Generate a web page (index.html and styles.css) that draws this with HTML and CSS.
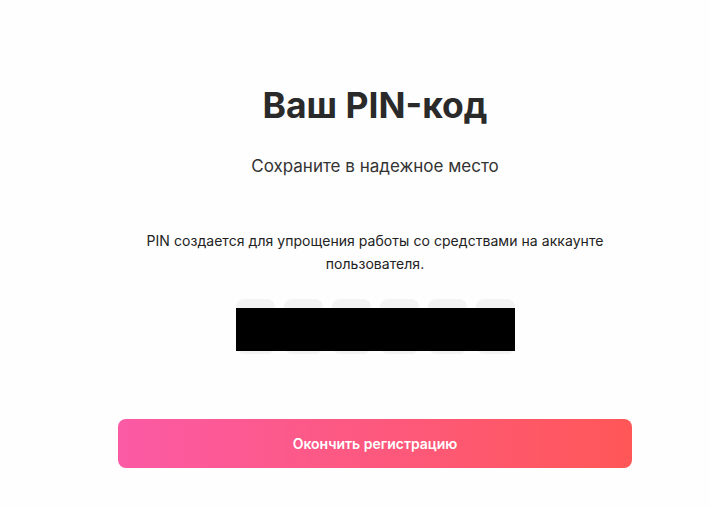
FILE: index.html
```html
<!DOCTYPE html>
<html>
<head>
  <title>PIN</title>
  <meta charset="UTF-8">
  <link rel="stylesheet" href="styles.css">
</head>
<body>
  <div class="page">
    <h1 class="title">Ваш PIN-код</h1>
    <p class="subtitle">Сохраните в надежное место</p>
    <p class="note">PIN создается для упрощения работы со средствами на аккаунте пользователя.</p>
    <div class="pin">
      <div class="cell"></div>
      <div class="cell"></div>
      <div class="cell"></div>
      <div class="cell"></div>
      <div class="cell"></div>
      <div class="cell"></div>
      <div class="mask"></div>
    </div>
    <button class="finish">Окончить регистрацию</button>
  </div>
</body>
</html>
```

FILE: styles.css
```css
body {
  margin: 0;
  background: #fefefe;
  font-family: Inter, "Noto Sans", sans-serif;
  color: #2a2a2a;
}

.page {
  width: 514px;
  margin-left: 118px;
  padding-top: 84px;
  display: flex;
  flex-direction: column;
  align-items: center;
}

.title {
  margin: 0;
  font-size: 35.5px;
  font-weight: 700;
  line-height: 44px;
}

.subtitle {
  margin: 26px 0 0;
  font-size: 17px;
  line-height: 24px;
  color: #333;
}

.note {
  margin: 51px 0 0;
  width: 470px;
  text-align: center;
  font-size: 14px;
  letter-spacing: 0.05px;
  line-height: 23px;
  color: #222;
}

.pin {
  position: relative;
  margin-top: 24px;
  display: flex;
  gap: 9px;
}

.cell {
  width: 39px;
  height: 55px;
  border-radius: 8px;
  background: #f3f3f3;
}

.mask {
  position: absolute;
  left: 0;
  right: 0;
  top: 9px;
  height: 43px;
  background: #000;
}

.finish {
  margin-top: 65px;
  width: 514px;
  height: 49px;
  border: none;
  border-radius: 8px;
  background: linear-gradient(90deg, #fb5aa5, #ff5757);
  color: #fff;
  font-family: Inter, "Noto Sans", sans-serif;
  font-size: 14px;
  font-weight: 600;
}
```
